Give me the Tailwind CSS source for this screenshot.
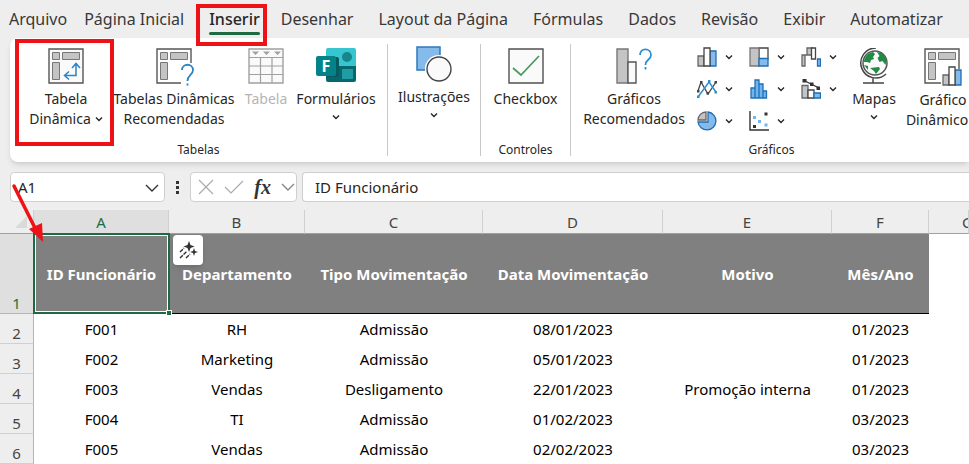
<!DOCTYPE html>
<html lang="pt-BR">
<head>
    <meta charset="UTF-8">
    <meta name="viewport" content="width=device-width, initial-scale=1.0">
    <title>Excel - Inserir</title>
    <script src="https://cdn.jsdelivr.net/npm/@tailwindcss/browser@4"></script>
</head>
<body class="bg-[#efeeee] text-[#262626] font-['Noto_Sans','Open_Sans',sans-serif] overflow-x-hidden">
    <svg class="hidden">
        <symbol id="chevron" viewBox="0 0 8 8"><path d="M1 2.5 4 5.5 7 2.5" fill="none" stroke="currentColor" stroke-width="1.4"/></symbol>
        <symbol id="chevron-wide" viewBox="0 0 14 14"><path d="m1 4 6 6 6-6" fill="none" stroke="currentColor" stroke-width="1.4"/></symbol>
    </svg>

    <!-- Guias -->
    <nav class="flex h-[38px] pl-[9px] gap-[25px] items-center whitespace-nowrap text-base overflow-hidden text-[#383838]">
        <a href="#">Arquivo</a>
        <a href="#" class="-ml-2">Página Inicial</a>
        <a href="#" class="relative font-medium text-[#262626]">Inserir<span class="absolute left-0 right-0 -bottom-1 h-[3px] rounded bg-[#1e6b41]"></span></a>
        <a href="#" class="-ml-1">Desenhar</a>
        <a href="#">Layout da Página</a>
        <a href="#">Fórmulas</a>
        <a href="#">Dados</a>
        <a href="#">Revisão</a>
        <a href="#">Exibir</a>
        <a href="#">Automatizar</a>
        <a href="#">Desenvolvedor</a>
    </nav>

    <!-- Faixa de opções -->
    <div class="ml-[10px] h-[124px] flex bg-white rounded-l-lg shadow-md overflow-hidden whitespace-nowrap text-sm leading-5">
        <section class="w-[377px] shrink-0 flex flex-col">
            <div class="flex h-[102px] pt-[10px]">
                <button class="w-[112px] flex flex-col items-center">
                    <svg class="size-9 mb-[5px]" viewBox="0 0 36 36" fill="none">
                        <path d="M1 1h34v34H1z" fill="#fafafa" stroke="#555" stroke-width="1.4"/>
                        <path d="M4.500 4.500h7v7h-7zM14.500 4.500h17v7h-17zM4.500 14.500h7v17h-7z" fill="#c4c4c4" stroke="#777"/>
                        <path d="M28 16v11.500H17M24 20l4-4.500 4 4.500M21 23.500l-4.500 4 4.500 4" stroke="#2e83c4" stroke-width="1.5"/>
                    </svg>
                    <span>Tabela</span>
                    <span class="flex items-center gap-1">Dinâmica <svg class="size-2"><use href="#chevron"/></svg></span>
                </button>
                <button class="w-[104px] flex flex-col items-center">
                    <svg class="w-10 h-9 mb-[5px] overflow-visible" viewBox="0 0 40 36" fill="none">
                        <path d="M27 35H3V1h34v14" stroke="#555" stroke-width="1.4"/>
                        <path d="M6.500 4.500h7v7h-7zM16.500 4.500h17v7h-17zM6.500 14.500h7v17h-7z" fill="#c4c4c4" stroke="#777"/>
                        <path d="M28 22c0-7 11-7 11 0 0 5-5.500 5-5.500 11M33.500 35.500v2" stroke="#2e83c4" stroke-width="1.800"/>
                    </svg>
                    <span>Tabelas Dinâmicas</span>
                    <span>Recomendadas</span>
                </button>
                <button class="w-[80px] flex flex-col items-center text-[#b5b5b5]" disabled>
                    <svg class="size-9 mb-[5px]" viewBox="0 0 36 36" fill="none">
                        <path d="M1 1h34v34H1z" fill="#fafafa" stroke="#a0a0a0" stroke-width="1.4"/>
                        <path d="M1 9.500h34M1 18h34M1 26.500h34M12.500 9v26M24 9v26" stroke="#a0a0a0" stroke-width="1.200"/>
                        <path d="M4 3.500h7L7.500 7zM15 3.500h7L18.500 7zM26 3.500h7L29.500 7z" fill="#a0a0a0"/>
                    </svg>
                    <span>Tabela</span>
                </button>
                <button class="w-[60px] flex flex-col items-center">
                    <svg class="w-10 h-9 mb-[5px]" viewBox="0 0 40 36">
                        <path d="M12 0h26q2 0 2 2v16H10V2q0-2 2-2z" fill="#37c6d0"/>
                        <path d="M10 18h30v14q0 2-2 2H12q-2 0-2-2z" fill="#06686c"/>
                        <circle cx="31" cy="9" r="5" fill="#15868c"/>
                        <path d="M26 21h11v10H26z" fill="#1f9da3"/>
                        <path d="M10 9h11q2 0 2 2v16q0 2-2 2H10z" fill="#055b60"/>
                        <rect y="8" width="20" height="20" rx="2" fill="#038387"/>
                        <text x="10" y="23.500" text-anchor="middle" font-size="16" font-weight="bold" fill="#fff">F</text>
                    </svg>
                    <span>Formulários</span>
                    <svg class="size-2 mt-1"><use href="#chevron"/></svg>
                </button>
            </div>
            <h2 class="text-center text-xs leading-5">Tabelas</h2>
        </section>

        <section class="w-[93px] shrink-0 my-[6px] border-l border-[#c8c8c8] flex justify-center">
            <button class="flex flex-col items-center self-start pt-[2px]">
                <svg class="size-9 mb-[5px]" viewBox="0 0 36 36">
                    <path d="M1 1h23v23H1z" fill="#84bbeb" stroke="#2d79bd" stroke-width="1.500"/>
                    <circle cx="23" cy="23" r="14" fill="#fff"/>
                    <circle cx="23" cy="23" r="12" fill="#fafafa" stroke="#444" stroke-width="1.400"/>
                </svg>
                <span>Ilustrações</span>
                <svg class="size-2 mt-1"><use href="#chevron"/></svg>
            </button>
        </section>

        <section class="w-[90px] shrink-0 my-[6px] border-l border-[#c8c8c8] flex flex-col">
            <button class="h-[96px] shrink-0 pt-1 flex flex-col items-center">
                <svg class="size-9 mb-[5px]" viewBox="0 0 36 36">
                    <path d="M1 1h34v34H1z" fill="#fafafa" stroke="#505050" stroke-width="1.400"/>
                    <path d="m5 20 8 7L31 8" fill="none" stroke="#4d9a63" stroke-width="1.800"/>
                </svg>
                <span>Checkbox</span>
            </button>
            <h2 class="text-center text-xs leading-5">Controles</h2>
        </section>

        <section class="w-[402px] shrink-0 my-[6px] border-l border-[#c8c8c8] flex flex-col">
            <div class="flex h-[96px] shrink-0 pt-1">
                <button class="w-[126px] shrink-0 flex flex-col items-center">
                    <svg class="size-9 mb-[5px]" viewBox="0 0 36 36" fill="none">
                        <path d="M1 1h11v34H1z" fill="#c4c4c4" stroke="#777" stroke-width="1.400"/>
                        <path d="M12 14h8v21h-8z" fill="#fafafa" stroke="#555" stroke-width="1.400"/>
                        <path d="M24 7c0-8 11-7 11 0 0 5-5.500 4-5.500 10M29.500 19v2.500" stroke="#2e8fd0" stroke-width="1.800"/>
                    </svg>
                    <span>Gráficos</span>
                    <span>Recomendados</span>
                </button>
                <div class="grid grid-cols-3 w-[156px] shrink-0 h-24 -mt-[7px] self-start">
                    <button class="flex items-center gap-2" aria-label="Colunas">
                        <svg class="size-5" viewBox="0 0 20 20" stroke-width="1.300">
                            <path d="M1 9h6v10H1z" fill="#c4c4c4" stroke="#666"/><path d="M13 4h6v15h-6z" fill="#84bbeb" stroke="#1f6eb5"/><path d="M7 1h6v18H7z" fill="#fff" stroke="#444"/>
                        </svg>
                        <svg class="size-2"><use href="#chevron"/></svg>
                    </button>
                    <button class="flex items-center gap-2" aria-label="Hierarquia">
                        <svg class="size-5" viewBox="0 0 20 20" stroke-width="1.300">
                            <path d="M10 1h9v11h-9z" fill="#fff" stroke="#444"/><path d="M1 1h9v18H1z" fill="#c4c4c4" stroke="#777"/><path d="M10 11.500h9V19h-9z" fill="#84bbeb" stroke="#1f6eb5"/>
                        </svg>
                        <svg class="size-2"><use href="#chevron"/></svg>
                    </button>
                    <button class="flex items-center gap-2" aria-label="Cascata">
                        <svg class="size-5" viewBox="0 0 20 20" stroke-width="1.300">
                            <path d="M1 19V8h5V1h5v7H4v11z" fill="#c4c4c4" stroke="#666"/><path d="M10.500 1h4v11h-4z" fill="#fff" stroke="#444"/><path d="M16.500 12h3v7h-3z" fill="#84bbeb" stroke="#1f6eb5"/>
                        </svg>
                        <svg class="size-2"><use href="#chevron"/></svg>
                    </button>
                    <button class="flex items-center gap-2" aria-label="Linhas">
                        <svg class="size-5" viewBox="0 0 20 20" fill="none" stroke-width="1.300">
                            <path d="M1 12 4 3l7 12 8-12" stroke="#444"/><path d="m1 18 11-15 7 10" stroke="#2e8fd0" stroke-width="1.500"/>
                            <path d="M0 11h2.500v2.500H0zM3 2h2.500v2.500H3zM9.500 13H12v2.500H9.500zM17.500 2H20v2.500h-2.500z" fill="#444"/><path d="M0 16.500h2.500V19H0zM11 1h2.500v2.500H11zM17.500 12H20v2.500h-2.500z" fill="#2e8fd0"/>
                        </svg>
                        <svg class="size-2"><use href="#chevron"/></svg>
                    </button>
                    <button class="flex items-center gap-2" aria-label="Estatística">
                        <svg class="size-5" viewBox="0 0 20 20" fill="#70b5ee" stroke="#1f6eb5" stroke-width="1.300">
                            <path d="M2 9h4v10H2zM6 1h4v18H6zM10 5h4v14h-4zM14 12h3.500v7H14z"/>
                        </svg>
                        <svg class="size-2"><use href="#chevron"/></svg>
                    </button>
                    <button class="flex items-center gap-2" aria-label="Combinação">
                        <svg class="size-5" viewBox="0 0 20 20" stroke-width="1.300">
                            <path d="M1 6.500h6V19H1z" fill="#c4c4c4" stroke="#666"/><path d="M7 11h6v8H7z" fill="#fff" stroke="#444"/><path d="M13 14h6.500v5H13z" fill="#84bbeb" stroke="#1f6eb5"/>
                            <path d="m3 1.500 15 7.500" stroke="#333"/><path d="M1.500 0h4v3.500h-4zM9 3.500h3.500V7H9zM15.500 7.500h3.500V11h-3.500z" fill="#333"/>
                        </svg>
                        <svg class="size-2"><use href="#chevron"/></svg>
                    </button>
                    <button class="flex items-center gap-2" aria-label="Pizza">
                        <svg class="size-5" viewBox="0 0 20 20" stroke-width="1.300">
                            <path d="M11 1a9 9 0 1 1-10 10h10z" fill="#84bbeb" stroke="#1f6eb5"/><path d="M9 1v8H1a8 8 0 0 1 8-8z" fill="#c4c4c4" stroke="#666"/>
                        </svg>
                        <svg class="size-2"><use href="#chevron"/></svg>
                    </button>
                    <button class="flex items-center gap-2" aria-label="Dispersão">
                        <svg class="size-5" viewBox="0 0 20 20">
                            <path d="M1 0v19h19" fill="none" stroke="#333" stroke-width="1.400"/>
                            <path d="M4 14h3v3H4zM15.500 1.500h3v3h-3z" fill="#333"/><path d="M4 5h3v3H4zM9 9h3v3H9zM15.500 12.500h3v3h-3z" fill="#70b5ee"/>
                        </svg>
                        <svg class="size-2"><use href="#chevron"/></svg>
                    </button>
                </div>
                <button class="w-[42px] shrink-0 flex flex-col items-center">
                    <svg class="size-9 mb-[5px]" viewBox="0 0 36 36" fill="none">
                        <circle cx="19" cy="15" r="12" fill="#fafafa" stroke="#555" stroke-width="1.500"/>
                        <path d="M8 14c0-5 4-9 9-10l2 2-2 3 1 2-3 1-1 3-3-1zM21 4c5 0 9 4 9.500 9l-1 4-3-4-3 1-2-4 2-2zM8 17l4 1v4zM14 20l9-1 1 2-4 5-2-3z" fill="#218b43"/>
                        <path d="M20 0A15 15 0 1 0 30 26M17 30v5M7 35h21" stroke="#444" stroke-width="1.500"/>
                    </svg>
                    <span>Mapas</span>
                    <svg class="size-2 mt-1"><use href="#chevron"/></svg>
                </button>
                <button class="w-[96px] shrink-0 flex flex-col items-center pt-px">
                    <svg class="w-[38px] h-9 mb-[5px] overflow-visible" viewBox="0 0 38 36" fill="none">
                        <path d="M17 34H1V0h34v20" stroke="#555" stroke-width="1.400"/>
                        <path d="M4.500 3.500h7v7h-7zM14.500 3.500h17v7h-17zM4.500 13.500h7v17h-7z" fill="#c4c4c4" stroke="#777"/>
                        <path d="M19 26h6v10h-6z" fill="#c4c4c4" stroke="#666" stroke-width="1.300"/><path d="M31 21h6v15h-6z" fill="#84bbeb" stroke="#1f6eb5" stroke-width="1.300"/><path d="M25 18h6v18h-6z" fill="#fff" stroke="#444" stroke-width="1.300"/>
                    </svg>
                    <span>Gráfico</span>
                    <span class="flex items-center gap-1">Dinâmico <svg class="size-2"><use href="#chevron"/></svg></span>
                </button>
            </div>
            <h2 class="text-center text-xs leading-5">Gráficos</h2>
        </section>
    </div>

    <!-- Barra de fórmulas -->
    <div class="flex h-[30px] mt-[10px] mb-2 pl-[10px]">
        <div class="relative w-[155px] shrink-0">
            <input aria-label="Caixa de nome" value="A1" class="w-full h-full bg-white border border-[#cfcfcf] rounded pl-[7px] text-[15px]">
            <svg class="absolute right-[6px] top-[9px] size-[14px] text-[#333]"><use href="#chevron-wide"/></svg>
        </div>
        <svg class="w-[25px] shrink-0" viewBox="0 0 25 30" fill="#333"><path d="M11 9h3v3h-3zM11 14h3v3h-3zM11 19h3v3h-3z"/></svg>
        <div class="w-[107px] shrink-0 flex items-center justify-between bg-white border border-[#cfcfcf] rounded pl-[7px] pr-px">
            <button aria-label="Cancelar"><svg class="size-4" viewBox="0 0 16 16"><path d="m1 1 14 14M15 1 1 15" stroke="#aaa" stroke-width="1.200"/></svg></button>
            <button aria-label="Inserir valor"><svg class="w-5 h-4" viewBox="0 0 20 16"><path d="m1 8 6 6L19 2" fill="none" stroke="#aaa" stroke-width="1.200"/></svg></button>
            <button class="font-['Liberation_Serif',serif] italic font-bold text-xl leading-6 text-[#333]">fx</button>
            <svg class="size-[14px] text-[#888]"><use href="#chevron-wide"/></svg>
        </div>
        <input aria-label="Barra de fórmulas" value="ID Funcionário" class="ml-[5px] min-w-0 flex-1 bg-white border border-r-0 border-[#cfcfcf] rounded-l pl-3 text-[15px]">
    </div>

    <!-- Planilha -->
    <table class="w-full table-fixed border-separate border-spacing-0 bg-white text-center text-[15px] leading-5 text-black">
        <colgroup>
            <col class="w-[34px]"><col class="w-[135px]"><col class="w-[136px]"><col class="w-[178px]"><col class="w-[180px]"><col class="w-[169px]"><col class="w-[97px]"><col>
        </colgroup>
        <thead class="text-[#444] bg-[#efeeee]">
            <tr class="h-6 *:font-normal *:border-r *:border-b *:border-r-[#d0d0d0] *:border-b-[#a0a0a0] *:p-0">
                <th><svg class="ml-auto mr-[6px] size-3" viewBox="0 0 12 12"><path d="M12 0v12H0z" fill="#dadada"/></svg></th>
                <th class="bg-[#dfdfdf] text-[#1e6b41]">A</th>
                <th>B</th>
                <th>C</th>
                <th>D</th>
                <th>E</th>
                <th>F</th>
                <th class="overflow-hidden"><span class="block pl-[33px] text-left">G</span></th>
            </tr>
        </thead>
        <tbody>
            <tr class="h-20 bg-[#808080] text-white font-bold *:p-0 *:border-b *:border-black">
                <th class="bg-[#dfdfdf] text-[#1e6b41] font-normal align-bottom border-r border-[#b5b5b5]!">1</th>
                <td class="relative">
                    ID Funcionário
                    <span class="absolute -inset-px border-2 border-[#1e6b41]"><span class="block h-full border border-white"></span></span>
                    <span class="absolute -right-[3px] -bottom-[3px] z-10 size-[6px] border border-white bg-[#1e6b41]"></span>
                </td>
                <td class="relative">
                    Departamento
                    <button class="absolute left-1 top-px size-[30px] rounded bg-white shadow-md" aria-label="Análise rápida">
                        <svg class="size-[30px]" viewBox="0 0 30 30" fill="#333">
                            <path d="m16 6 1.500 4 4 1.500-4 1.500-1.500 4-1.500-4-4-1.500 4-1.500zM21 13l1 3 3 1-3 1-1 3-1-3-3-1 3-1z"/>
                            <path d="m7 17 4-4M7 23l7-7M13 23l4-4" stroke="#333" stroke-width="1.400" stroke-dasharray="4 1"/>
                        </svg>
                    </button>
                </td>
                <td>Tipo Movimentação</td>
                <td>Data Movimentação</td>
                <td>Motivo</td>
                <td>Mês/Ano</td>
                <td class="bg-white border-b-0!"></td>
            </tr>
            <tr class="h-[30px] *:p-0">
                <th class="bg-[#efeeee] font-normal text-[#444] align-bottom border-r border-b border-r-[#b5b5b5] border-b-[#d0d0d0]">2</th>
                <td>F001</td><td>RH</td><td>Admissão</td><td>08/01/2023</td><td></td><td>01/2023</td><td></td>
            </tr>
            <tr class="h-[30px] *:p-0">
                <th class="bg-[#efeeee] font-normal text-[#444] align-bottom border-r border-b border-r-[#b5b5b5] border-b-[#d0d0d0]">3</th>
                <td>F002</td><td>Marketing</td><td>Admissão</td><td>05/01/2023</td><td></td><td>01/2023</td><td></td>
            </tr>
            <tr class="h-[30px] *:p-0">
                <th class="bg-[#efeeee] font-normal text-[#444] align-bottom border-r border-b border-r-[#b5b5b5] border-b-[#d0d0d0]">4</th>
                <td>F003</td><td>Vendas</td><td>Desligamento</td><td>22/01/2023</td><td>Promoção interna</td><td>01/2023</td><td></td>
            </tr>
            <tr class="h-[30px] *:p-0">
                <th class="bg-[#efeeee] font-normal text-[#444] align-bottom border-r border-b border-r-[#b5b5b5] border-b-[#d0d0d0]">5</th>
                <td>F004</td><td>TI</td><td>Admissão</td><td>01/02/2023</td><td></td><td>03/2023</td><td></td>
            </tr>
            <tr class="h-[30px] *:p-0">
                <th class="bg-[#efeeee] font-normal text-[#444] align-bottom border-r border-b border-r-[#b5b5b5] border-b-[#d0d0d0]">6</th>
                <td>F005</td><td>Vendas</td><td>Admissão</td><td>02/02/2023</td><td></td><td>03/2023</td><td></td>
            </tr>
        </tbody>
    </table>

    <!-- Destaques em vermelho -->
    <div class="absolute left-[196px] top-[4px] w-[71px] h-[42px] border-4 border-[#ee1115] pointer-events-none"></div>
    <div class="absolute left-[15px] top-[39px] w-[99px] h-[107px] border-4 border-[#ee1115] pointer-events-none"></div>
    <svg class="absolute left-[10px] top-[182px] w-[36px] h-[62px] pointer-events-none" viewBox="0 0 36 62"><path d="m4 4 21 42" stroke="#ee1115" stroke-width="3.500" stroke-linecap="round"/><path d="m33 60-14-13 13-6z" fill="#ee1115"/></svg>
</body>
</html>
